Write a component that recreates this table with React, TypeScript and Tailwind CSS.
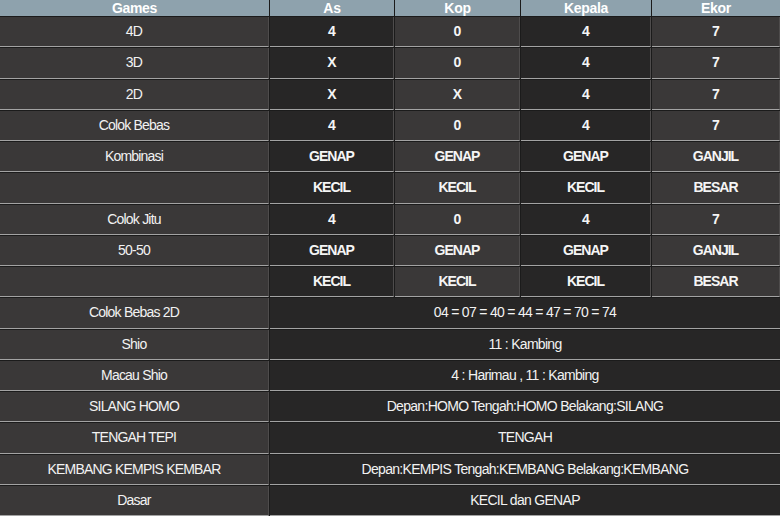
import React from "react";

type Row =
  | { label: string; vals: string[]; bold?: boolean }
  | { label: string; merged: string };

const rows: Row[] = [
  { label: "4D", vals: ["4", "0", "4", "7"] },
  { label: "3D", vals: ["X", "0", "4", "7"] },
  { label: "2D", vals: ["X", "X", "4", "7"] },
  { label: "Colok Bebas", vals: ["4", "0", "4", "7"] },
  { label: "Kombinasi", vals: ["GENAP", "GENAP", "GENAP", "GANJIL"] },
  { label: "", vals: ["KECIL", "KECIL", "KECIL", "BESAR"] },
  { label: "Colok Jitu", vals: ["4", "0", "4", "7"] },
  { label: "50-50", vals: ["GENAP", "GENAP", "GENAP", "GANJIL"] },
  { label: "", vals: ["KECIL", "KECIL", "KECIL", "BESAR"] },
  { label: "Colok Bebas 2D", merged: "04 = 07 = 40 = 44 = 47 = 70 = 74" },
  { label: "Shio", merged: "11 : Kambing" },
  { label: "Macau Shio", merged: "4 : Harimau , 11 : Kambing" },
  { label: "SILANG HOMO", merged: "Depan:HOMO Tengah:HOMO Belakang:SILANG" },
  { label: "TENGAH TEPI", merged: "TENGAH" },
  { label: "KEMBANG KEMPIS KEMBAR", merged: "Depan:KEMPIS Tengah:KEMBANG Belakang:KEMBANG" },
  { label: "Dasar", merged: "KECIL dan GENAP" },
];

const headers = ["Games", "As", "Kop", "Kepala", "Ekor"];
const light = "bg-[#3a3838]";
const dark = "bg-[#272626]";

export default function App() {
  return (
    <div
      className="w-[780px] h-[516px] overflow-hidden bg-[#1b1b1b] grid grid-cols-[269px_124px_125px_130px_1fr] grid-rows-[16px_repeat(16,1fr)] gap-[1px] text-white"
      style={{ fontFamily: '"Liberation Sans", Arial, sans-serif' }}
    >
      {headers.map((h) => (
        <div
          key={h}
          className="bg-[#8ea2ad] flex items-center justify-center text-[14px] font-bold leading-none pb-[1px] tracking-[-0.3px]"
        >
          {h}
        </div>
      ))}
      {rows.map((r, i) => (
        <React.Fragment key={i}>
          <div
            className={`${light} border-b border-b-[#a3a3a3] border-r border-r-[#4e4c4c] flex items-center justify-center text-[14px] tracking-[-0.8px] text-[#f2f2f2]`}
          >
            {r.label}
          </div>
          {"merged" in r ? (
            <div
              className={`${dark} col-span-4 border-b border-b-[#a3a3a3] flex items-center justify-center text-[14px] tracking-[-0.7px] text-[#f2f2f2]`}
            >
              {r.merged}
            </div>
          ) : (
            r.vals.map((v, j) => (
              <div
                key={j}
                className={`${j % 2 === 0 ? dark : light} border-b border-b-[#a3a3a3] border-r border-r-[#4e4c4c] flex items-center justify-center text-[14px] font-bold tracking-[-1px] text-[#f5f5f5]`}
              >
                {v}
              </div>
            ))
          )}
        </React.Fragment>
      ))}
    </div>
  );
}
